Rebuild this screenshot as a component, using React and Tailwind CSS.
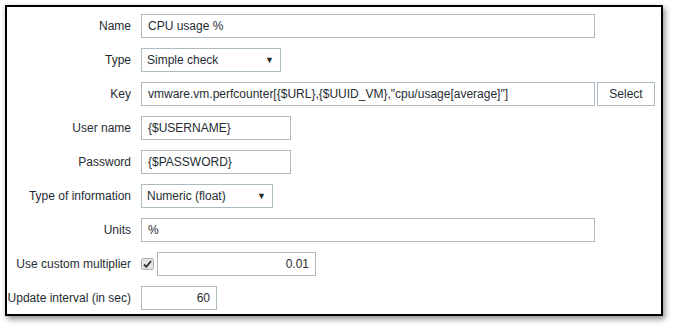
import React from "react";

const font = { fontFamily: '"Liberation Sans", Arial, sans-serif' };

function Label({ children }) {
  return (
    <div className="w-[124px] shrink-0 text-right text-[12px] text-[#1f2c33] whitespace-nowrap">
      {children}
    </div>
  );
}

function Input({ w, value, right }) {
  return (
    <div
      className={`${w} h-[24px] border border-[#acbbc2] bg-white flex items-center px-[6px] text-[12px] text-[#1f2c33] whitespace-nowrap overflow-hidden ${right ? "justify-end" : ""}`}
    >
      {value}
    </div>
  );
}

function Select({ w, value }) {
  return (
    <div className={`${w} h-[24px] border border-[#acbbc2] bg-white flex items-center justify-between pl-[5px] pr-[6px] text-[12px] text-[#1f2c33]`}>
      <span>{value}</span>
      <span className="text-[9px] leading-none text-[#1f2c33]">▼</span>
    </div>
  );
}

function Row({ label, children }) {
  return (
    <div className="flex items-center h-[24px]">
      <Label>{label}</Label>
      <div className="ml-[10px] flex items-center">{children}</div>
    </div>
  );
}

export default function App() {
  return (
    <div className="w-[673px] h-[325px] bg-white overflow-hidden" style={font}>
      <div className="ml-[5px] mt-[5px] w-[658px] h-[311px] border-2 border-black bg-white shadow-[2px_3px_6px_rgba(0,0,0,0.45)] pt-[7px] flex flex-col gap-[10px]">
        <Row label="Name">
          <Input w="w-[454px]" value="CPU usage %" />
        </Row>
        <Row label="Type">
          <Select w="w-[140px]" value="Simple check" />
        </Row>
        <Row label="Key">
          <Input w="w-[454px]" value={'vmware.vm.perfcounter[{$URL},{$UUID_VM},"cpu/usage[average]"]'} />
          <div className="ml-[2px] w-[58px] h-[24px] border border-[#acbbc2] bg-white flex items-center justify-center text-[12px] text-[#1f2c33]">
            Select
          </div>
        </Row>
        <Row label="User name">
          <Input w="w-[150px]" value="{$USERNAME}" />
        </Row>
        <Row label="Password">
          <Input w="w-[150px]" value="{$PASSWORD}" />
        </Row>
        <Row label="Type of information">
          <Select w="w-[132px]" value="Numeric (float)" />
        </Row>
        <Row label="Units">
          <Input w="w-[454px]" value="%" />
        </Row>
        <Row label="Use custom multiplier">
          <div className="w-[13px] h-[12px] rounded-[2px] border border-[#b0b0b0] bg-[#e4e4e4] flex items-center justify-center">
            <svg width="9" height="8" viewBox="0 0 9 8">
              <path d="M1 4.5 L3.3 6.8 L8 1.2" fill="none" stroke="#333" strokeWidth="1.8" />
            </svg>
          </div>
          <div className="ml-[3px]">
            <Input w="w-[159px]" value="0.01" right />
          </div>
        </Row>
        <Row label="Update interval (in sec)">
          <Input w="w-[76px]" value="60" right />
        </Row>
      </div>
    </div>
  );
}
